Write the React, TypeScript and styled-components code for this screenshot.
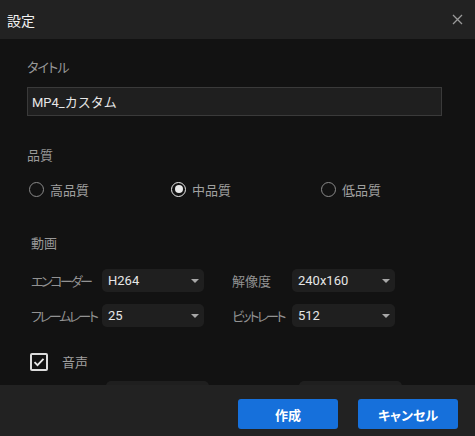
import styled, { createGlobalStyle } from "styled-components";

const GlobalStyle = createGlobalStyle`
  html, body {
    margin: 0;
    padding: 0;
    background: #121212;
  }
  body {
    font-family: "Roboto", "Noto Sans CJK JP", sans-serif;
    font-size: 13px;
    color: #e0e0e0;
  }
  * {
    box-sizing: border-box;
  }
`;

const Dialog = styled.div`
  width: 475px;
  height: 436px;
  display: flex;
  flex-direction: column;
  background: #121212;
  overflow: hidden;
`;

const Header = styled.div`
  height: 39px;
  flex: none;
  display: flex;
  align-items: center;
  justify-content: space-between;
  padding: 0 11px 0 7px;
  background: #222222;
`;

const HeaderTitle = styled.div`
  font-size: 14px;
  color: #f2f2f2;
`;

const CloseButton = styled.button`
  width: 14px;
  height: 14px;
  padding: 0;
  border: none;
  background: transparent;
  display: flex;
  align-items: center;
  justify-content: center;
  cursor: pointer;
`;

const Body = styled.div`
  flex: 1;
  min-height: 0;
  overflow-y: scroll;
  margin-right: 3px;
  padding: 20px 0 89px 27px;

  &::-webkit-scrollbar {
    width: 8px;
  }
  &::-webkit-scrollbar-track {
    background: #121212;
  }
  &::-webkit-scrollbar-thumb {
    background: #3c3c3c;
    border-radius: 4px;
  }
`;

const Section = styled.div<{ $top?: number; $indent?: number }>`
  margin-top: ${(p) => p.$top ?? 0}px;
  padding-left: ${(p) => p.$indent ?? 0}px;
`;

const SectionLabel = styled.div<{ $spacing?: number }>`
  font-size: 13px;
  line-height: 18px;
  color: #989898;
  font-feature-settings: "palt";
  letter-spacing: ${(p) => p.$spacing ?? 0}px;
`;

const TextInput = styled.input`
  display: block;
  margin-top: 10px;
  width: 415px;
  height: 29px;
  padding: 0 4px;
  background: #1f1f1f;
  border: 1px solid #3a3a3a;
  color: #e6e6e6;
  font-family: "Roboto", "Noto Sans CJK JP", sans-serif;
  font-size: 13px;
  outline: none;
`;

const RadioGroup = styled.div`
  margin-top: 15px;
  display: grid;
  grid-template-columns: 142px 150px 1fr;
  padding-left: 2px;
`;

const RadioItem = styled.label`
  display: flex;
  align-items: center;
  gap: 6px;
  height: 18px;
  font-size: 13px;
  color: #a0a0a0;
`;

const RadioCircle = styled.span<{ $checked?: boolean }>`
  width: 15px;
  height: 15px;
  border-radius: 50%;
  border: 1.5px solid ${(p) => (p.$checked ? "#e8e8e8" : "#8a8a8a")};
  display: flex;
  align-items: center;
  justify-content: center;

  &::after {
    content: "";
    display: ${(p) => (p.$checked ? "block" : "none")};
    width: 8px;
    height: 8px;
    border-radius: 50%;
    background: #e8e8e8;
  }
`;

const FieldRows = styled.div<{ $top: number }>`
  margin-top: ${(p) => p.$top}px;
  display: flex;
  flex-direction: column;
  gap: 12px;
`;

const FieldRow = styled.div`
  display: flex;
  gap: 28px;
`;

const Field = styled.div`
  display: flex;
  align-items: center;
`;

const FieldLabel = styled.span<{ $width: number; $spacing: number }>`
  width: ${(p) => p.$width}px;
  flex: none;
  font-size: 13px;
  color: #929292;
  font-feature-settings: "palt";
  white-space: nowrap;
  overflow: hidden;
  letter-spacing: ${(p) => p.$spacing}px;
`;

const Select = styled.div<{ $width: number }>`
  width: ${(p) => p.$width}px;
  height: 23px;
  border-radius: 5px;
  background: #1f1f1f;
  display: flex;
  align-items: center;
  justify-content: space-between;
  padding: 0 5px 0 6px;
  color: #e6e6e6;
  font-size: 13px;
`;

const Arrow = styled.span`
  width: 0;
  height: 0;
  border-left: 4px solid transparent;
  border-right: 4px solid transparent;
  border-top: 4px solid #a8a8a8;
`;

const CheckRow = styled.label`
  display: flex;
  align-items: center;
  gap: 14px;
  padding-left: 3px;
`;

const CheckBox = styled.span`
  width: 18px;
  height: 18px;
  border: 2px solid #dcdcdc;
  border-radius: 2px;
  display: flex;
  align-items: center;
  justify-content: center;
`;

const CheckLabel = styled.span`
  font-size: 13px;
  color: #a0a0a0;
`;

const Footer = styled.div`
  height: 51px;
  flex: none;
  display: flex;
  justify-content: flex-end;
  align-items: flex-start;
  gap: 20px;
  padding: 14px 17px 0 0;
  background: #222222;
`;

const PrimaryButton = styled.button`
  width: 100px;
  height: 30px;
  border: none;
  border-radius: 3px;
  background: #1670db;
  color: #ffffff;
  font-family: "Roboto", "Noto Sans CJK JP", sans-serif;
  font-size: 13px;
  font-weight: 700;
  font-feature-settings: "palt";
  cursor: pointer;
`;

type SelectField = {
  label: string;
  value: string;
  labelWidth: number;
  width: number;
  spacing: number;
};

const videoRows: SelectField[][] = [
  [
    { label: "エンコーダー", value: "H264", labelWidth: 71, width: 102, spacing: -2.4 },
    { label: "解像度", value: "240x160", labelWidth: 60, width: 103, spacing: 0 },
  ],
  [
    { label: "フレームレート", value: "25", labelWidth: 71, width: 102, spacing: -2.2 },
    { label: "ビットレート", value: "512", labelWidth: 60, width: 103, spacing: -2.4 },
  ],
];

const audioRows: SelectField[][] = [
  [
    { label: "エンコーダー", value: "AAC", labelWidth: 71, width: 103, spacing: -2.4 },
    { label: "チャンネル", value: "2", labelWidth: 62, width: 103, spacing: -2 },
  ],
];

const renderRows = (rows: SelectField[][]) =>
  rows.map((row, i) => (
    <FieldRow key={i}>
      {row.map((f) => (
        <Field key={f.label}>
          <FieldLabel $width={f.labelWidth} $spacing={f.spacing}>
            {f.label}
          </FieldLabel>
          <Select $width={f.width}>
            <span>{f.value}</span>
            <Arrow />
          </Select>
        </Field>
      ))}
    </FieldRow>
  ));

const qualities = [
  { label: "高品質", checked: false },
  { label: "中品質", checked: true },
  { label: "低品質", checked: false },
];

export default function App() {
  return (
    <>
      <GlobalStyle />
      <Dialog>
        <Header>
          <HeaderTitle>設定</HeaderTitle>
          <CloseButton aria-label="close">
            <svg width="11" height="11" viewBox="0 0 11 11">
              <path d="M1 1L10 10M10 1L1 10" stroke="#9a9a9a" strokeWidth="1.3" />
            </svg>
          </CloseButton>
        </Header>

        <Body>
          <Section>
            <SectionLabel $spacing={-0.8}>タイトル</SectionLabel>
            <TextInput defaultValue="MP4_カスタム" />
          </Section>

          <Section $top={31}>
            <SectionLabel>品質</SectionLabel>
            <RadioGroup>
              {qualities.map((q) => (
                <RadioItem key={q.label}>
                  <RadioCircle $checked={q.checked} />
                  {q.label}
                </RadioItem>
              ))}
            </RadioGroup>
          </Section>

          <Section $top={37} $indent={4}>
            <SectionLabel>動画</SectionLabel>
            <FieldRows $top={16}>{renderRows(videoRows)}</FieldRows>
          </Section>

          <Section $top={25}>
            <CheckRow>
              <CheckBox>
                <svg width="12" height="10" viewBox="0 0 12 10">
                  <path d="M1.5 5.2L4.5 8.2L10.5 1.8" fill="none" stroke="#e8e8e8" strokeWidth="1.8" />
                </svg>
              </CheckBox>
              <CheckLabel>音声</CheckLabel>
            </CheckRow>
          </Section>

          <Section $indent={8}>
            <FieldRows $top={10}>{renderRows(audioRows)}</FieldRows>
          </Section>
        </Body>

        <Footer>
          <PrimaryButton>作成</PrimaryButton>
          <PrimaryButton>キャンセル</PrimaryButton>
        </Footer>
      </Dialog>
    </>
  );
}
